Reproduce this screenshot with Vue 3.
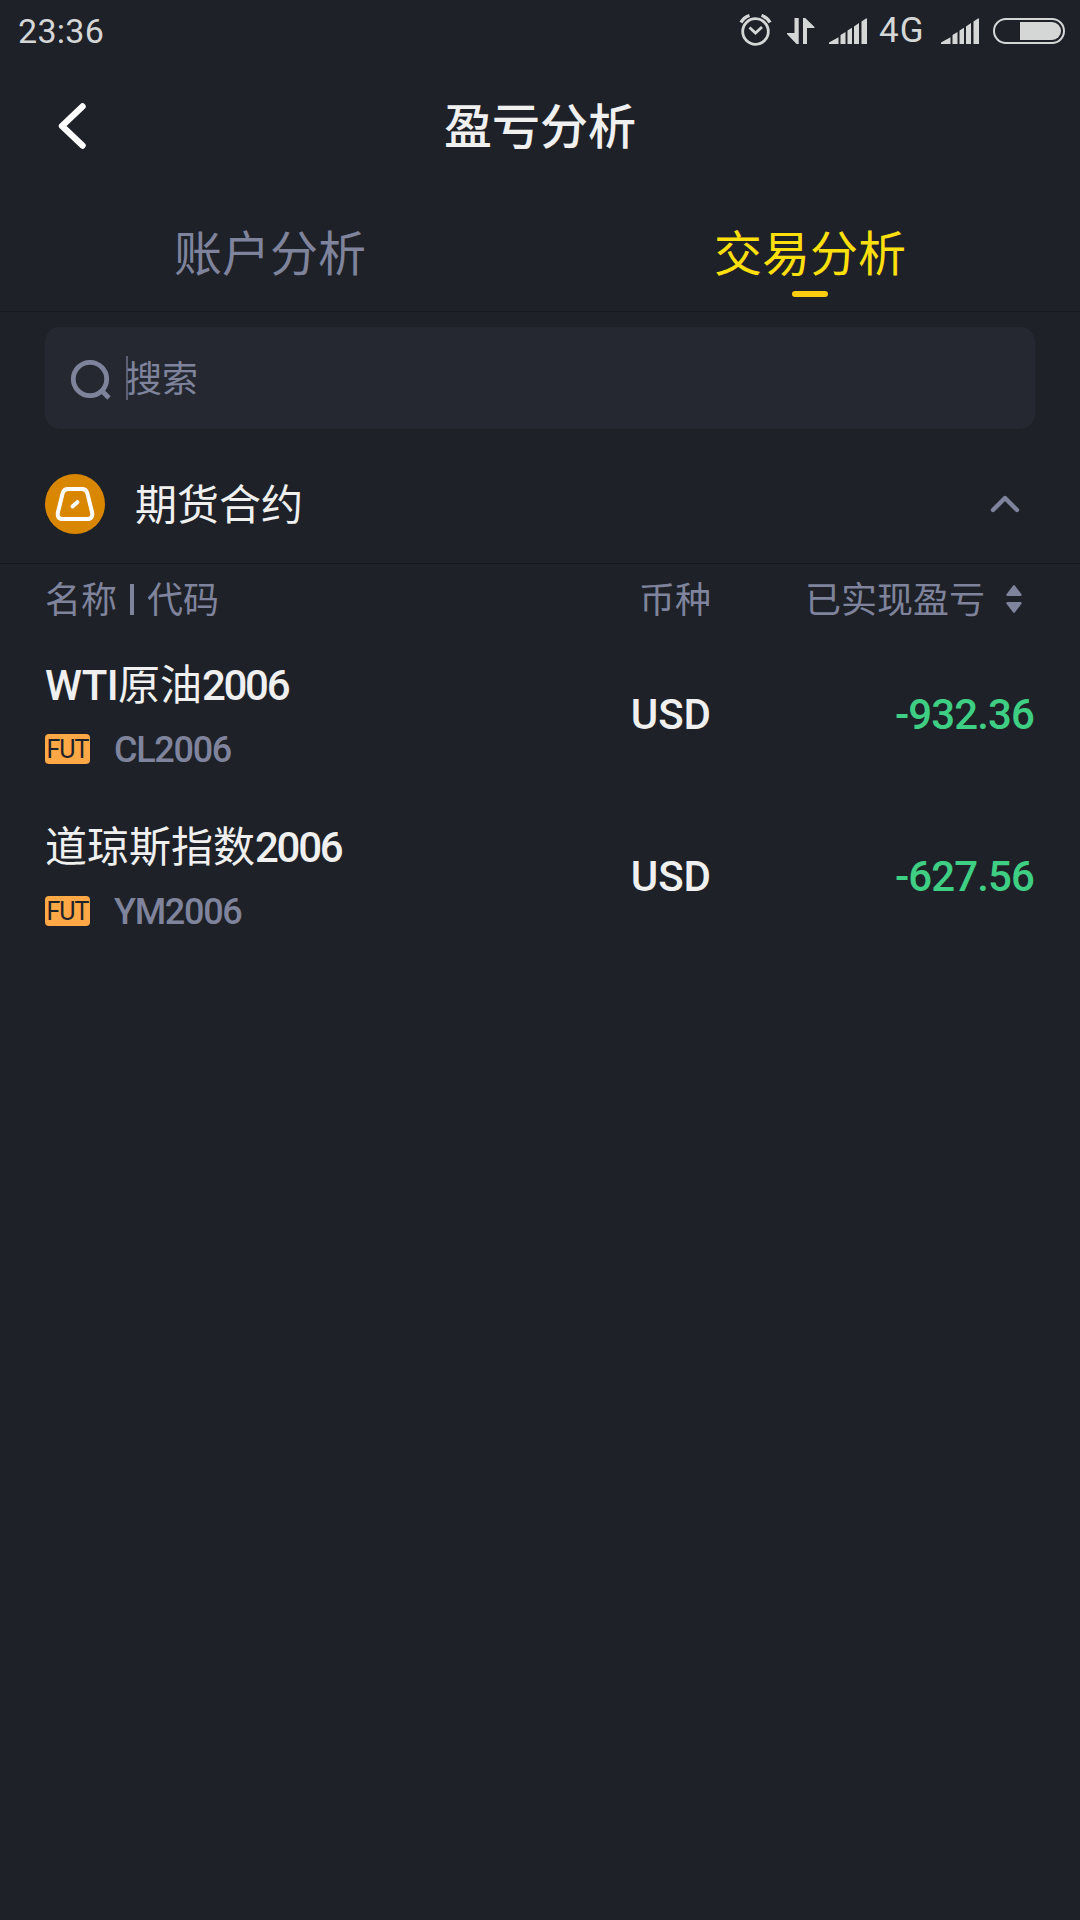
<template>
  <div class="page">
    <div class="status-bar">
      <span class="time">23:36</span>
      <div class="status-icons">
        <svg class="alarm" width="34" height="34" viewBox="0 0 34 34" fill="none">
          <circle cx="16.5" cy="18.5" r="12.8" stroke="#d5d7d7" stroke-width="2.800" />
          <path d="M10.500 14.500l6 5.500 6.500-6" stroke="#d5d7d7" stroke-width="2.800" />
          <path d="M2 9.500Q4.500 4.500 10.500 2.500M31 9.500Q28.500 4.500 22.500 2.500" stroke="#d5d7d7" stroke-width="3.400" />
        </svg>
        <svg class="data" width="28" height="28" viewBox="0 0 28 28" fill="#d5d7d7">
          <path d="M7.500 1h4.200v26h-2.200L0 17v-1h7.500zM16 1h2.200L27.500 10v1H20v16h-4z" />
        </svg>
        <svg class="signal" width="38" height="26" viewBox="0 0 38 26" fill="#d5d7d7">
          <path d="M0 26v-1.500L9.500 19.200V26zM11.500 17l5-3v12h-5zM18.500 12.500l4.500-2.800V26h-4.500zM25 8.500l5-3.500v21h-5zM32.500 3.500l4.500-3h1V26h-5.500z" />
        </svg>
        <span class="network">4G</span>
        <svg class="signal second" width="38" height="26" viewBox="0 0 38 26" fill="#d5d7d7">
          <path d="M0 26v-1.500L9.500 19.200V26zM11.500 17l5-3v12h-5zM18.500 12.500l4.500-2.800V26h-4.500zM25 8.500l5-3.500v21h-5zM32.500 3.500l4.500-3h1V26h-5.500z" />
        </svg>
        <svg class="battery" width="72" height="26" viewBox="0 0 72 26">
          <rect x="1" y="1" width="70" height="24" rx="12" fill="none" stroke="#d5d7d7" stroke-width="2" />
          <path d="M27 4h32a9 9 0 0 1 0 18H27z" fill="#d5d7d7" />
        </svg>
      </div>
    </div>

    <div class="nav">
      <svg class="back" width="32" height="50" viewBox="0 0 32 50" fill="none">
        <path d="M26.500 5.500L6 25L26.500 44.500" stroke="#fff" stroke-width="6.400" stroke-linecap="round" stroke-linejoin="round" />
      </svg>
      <h1>盈亏分析</h1>
    </div>

    <div class="tabs">
      <div
        v-for="tab in tabs"
        :key="tab"
        :class="['tab', { active: tab === activeTab }]"
        @click="activeTab = tab"
      >
        <span>{{ tab }}</span>
        <i class="tab-line"></i>
      </div>
    </div>

    <div class="search">
      <svg width="42" height="42" viewBox="0 0 42 42" fill="none" stroke="#7f849c" stroke-width="4.800">
        <circle cx="20" cy="20" r="16.700" />
        <path d="M32 32l7 7" />
      </svg>
      <i class="cursor"></i>
      <span>搜索</span>
    </div>

    <div class="group" @click="expanded = !expanded">
      <svg width="60" height="60" viewBox="0 0 60 60" fill="none">
        <circle cx="30" cy="30" r="30" fill="#d98600" />
        <path d="M23 15h14q4 0 5.300 4l4.700 19q1.500 7-5 7H18q-6.500 0-5-7l4.700-19q1.300-4 5.300-4z" stroke="#fff" stroke-width="4" />
        <path d="M27.500 32.500l5-4.500" stroke="#fff" stroke-width="4" stroke-linecap="round" />
      </svg>
      <span>期货合约</span>
      <svg :class="['arrow', { closed: !expanded }]" width="30" height="18" viewBox="0 0 30 18" fill="none">
        <path d="M3 15L15 3L27 15" stroke="#7f849c" stroke-width="4.400" stroke-linecap="round" stroke-linejoin="round" />
      </svg>
    </div>

    <div v-if="expanded" class="table">
      <div class="row head">
        <div class="col-name"><span>名称</span><i class="bar"></i><span>代码</span></div>
        <div class="col-currency">币种</div>
        <div class="col-profit">
          <span>已实现盈亏</span>
          <svg width="16" height="28" viewBox="0 0 16 28" fill="#7f849c">
            <path d="M7 .700Q8-.500 9 .700L15.500 9.300Q16 11 14.500 11h-13Q0 11 .500 9.300zM7 27.300Q8 28.500 9 27.300L15.500 18.700Q16 17 14.500 17h-13Q0 17 .500 18.700z" />
          </svg>
        </div>
      </div>
      <div v-for="item in items" :key="item.code" class="row item">
        <div class="col-name">
          <div class="name">
            <span v-if="item.prefix" class="latin prefix">{{ item.prefix }}</span>{{ item.name }}<span class="latin">{{ item.month }}</span>
          </div>
          <div class="sub">
            <span class="tag">FUT</span>
            <span class="code">{{ item.code }}</span>
          </div>
        </div>
        <div class="col-currency">{{ item.currency }}</div>
        <div class="col-profit">{{ item.profit }}</div>
      </div>
    </div>
  </div>
</template>

<script setup>
import { ref } from 'vue'

const tabs = ['账户分析', '交易分析']
const activeTab = ref('交易分析')
const expanded = ref(true)

const items = ref([
  { prefix: 'WTI', name: '原油', month: '2006', code: 'CL2006', currency: 'USD', profit: '-932.36' },
  { prefix: '', name: '道琼斯指数', month: '2006', code: 'YM2006', currency: 'USD', profit: '-627.56' },
])
</script>

<style>
body {
  background: #1e2128;
}
</style>

<style scoped>
.page {
  min-height: 1920px;
  background: #1e2128;
  color: #f0f0f0;
  font-family: 'Noto Sans CJK SC', sans-serif;
}

.page svg {
  display: block;
  flex: none;
}

.status-bar {
  display: flex;
  justify-content: space-between;
  align-items: center;
  height: 62px;
  padding: 0 15px 0 18px;
  box-sizing: border-box;
  color: #d5d7d7;
  font-family: Roboto, sans-serif;
  font-size: 34px;
  line-height: 62px;
}

.time {
  letter-spacing: 0.3px;
}

.status-icons {
  display: flex;
  align-items: center;
}

.alarm {
  margin-right: 14px;
  margin-top: -3px;
}

.data {
  margin-right: 14px;
}

.signal {
  margin-right: 12px;
}

.network {
  width: 62px;
  font-size: 35px;
  letter-spacing: 1px;
}

.signal.second {
  margin-right: 14px;
}

.nav {
  display: grid;
  grid-template-columns: 200px 1fr 200px;
  align-items: center;
  height: 128px;
}

.back {
  margin-left: 56px;
}

h1 {
  margin: 0;
  padding-bottom: 6px;
  text-align: center;
  font-size: 48px;
  font-weight: 500;
  line-height: 60px;
}

.tabs {
  display: flex;
  height: 121px;
  border-bottom: 1px solid #15171c;
}

.tab {
  flex: 1;
  display: flex;
  flex-direction: column;
  align-items: center;
  padding-top: 30px;
  color: #7f849c;
  font-size: 48px;
  line-height: 60px;
}

.tab-line {
  width: 36px;
  height: 6px;
  margin-top: 11px;
  border-radius: 3px;
}

.tab.active {
  color: #ffdf0c;
}

.active .tab-line {
  background: #facd0e;
}

.search {
  display: flex;
  align-items: center;
  height: 102px;
  margin: 15px 45px 0;
  padding-left: 25px;
  border-radius: 15px;
  background: #252830;
  color: #7f849c;
  font-size: 36px;
}

.search svg {
  margin-top: 3px;
}

.search span {
  margin-left: -2px;
  padding-bottom: 4px;
}

.cursor {
  width: 2px;
  height: 44px;
  margin-left: 14px;
  background: #5c6071;
}

.group {
  display: flex;
  align-items: center;
  height: 135px;
  padding: 16px 60px 0 45px;
  box-sizing: border-box;
  border-bottom: 1px solid #15171c;
  font-size: 42px;
}

.group span {
  flex: 1;
  margin-left: 30px;
  padding-bottom: 6px;
}

.arrow.closed {
  transform: rotate(180deg);
}

.row {
  display: flex;
  align-items: center;
  padding: 0 45px;
}

.col-name {
  flex: 1;
}

.col-currency {
  width: 120px;
  text-align: right;
}

.col-profit {
  width: 324px;
  text-align: right;
}

.head {
  height: 70px;
  color: #7f849c;
  font-size: 36px;
  line-height: 66px;
}

.head span,
.head .col-currency {
  padding-bottom: 5px;
}

.head .col-name,
.head .col-profit {
  display: flex;
  align-items: center;
}

.head .col-profit {
  justify-content: flex-end;
  gap: 21px;
  padding-right: 13px;
  box-sizing: border-box;
}

.bar {
  width: 4px;
  height: 31px;
  margin: 0 13px;
  background: #7f849c;
}

.item {
  height: 162px;
  font-family: Roboto, sans-serif;
  font-size: 42px;
  font-weight: 500;
}

.item .col-name {
  padding-bottom: 5px;
}

.name {
  font-family: 'Noto Sans CJK SC', sans-serif;
  font-weight: 400;
  line-height: 60px;
}

.latin {
  font-family: Roboto, sans-serif;
  font-weight: 500;
  letter-spacing: -2.3px;
}

.prefix {
  letter-spacing: -0.6px;
}

.sub {
  display: flex;
  align-items: center;
  height: 50px;
  margin-top: 8px;
}

.tag {
  width: 45px;
  height: 30px;
  border-radius: 4px;
  background: #ffa845;
  color: #1f2229;
  font-size: 25px;
  font-weight: 400;
  line-height: 31px;
  letter-spacing: -1px;
  text-align: center;
}

.code {
  margin-left: 24px;
  padding-top: 3px;
  color: #7f849c;
  font-size: 36px;
  letter-spacing: -1.3px;
}

.item .col-currency,
.item .col-profit {
  padding-bottom: 2px;
}

.item .col-profit {
  color: #3fcf84;
  letter-spacing: -0.9px;
  padding-right: 1px;
  box-sizing: border-box;
}
</style>
